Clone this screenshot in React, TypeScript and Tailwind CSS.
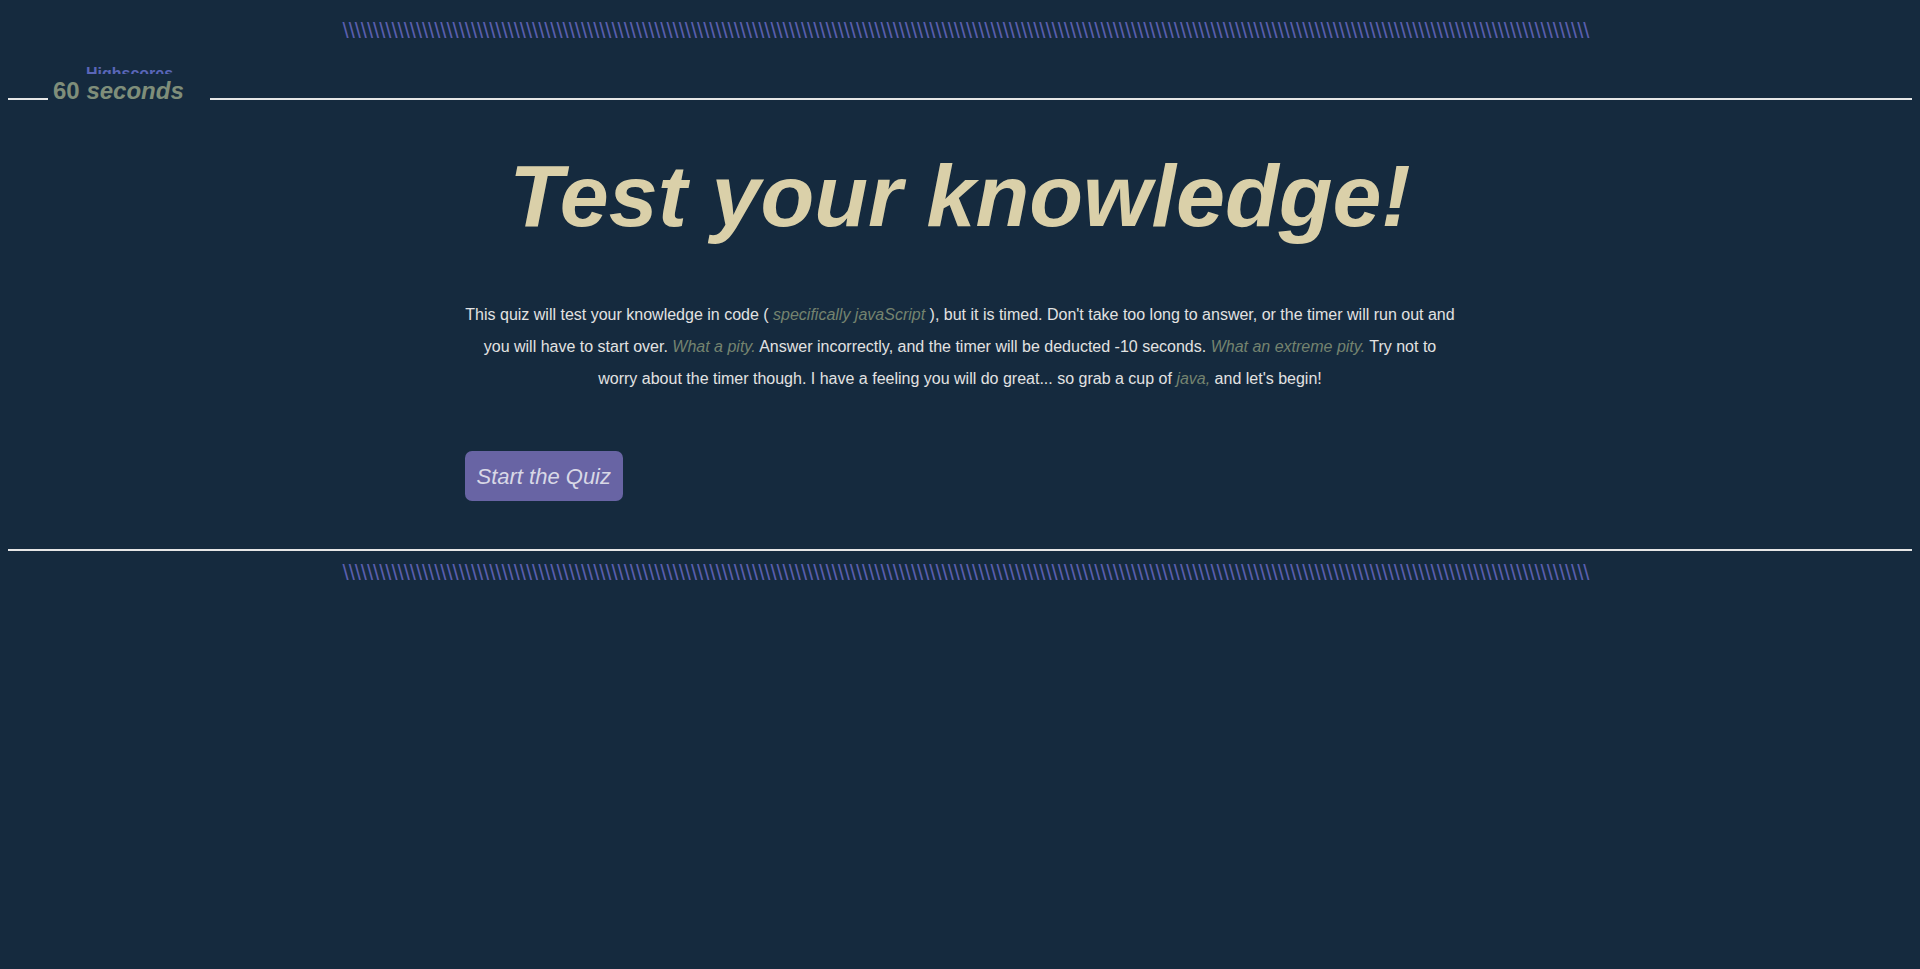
import React from "react";

const slashes = "\\".repeat(204);

const App = () => {
  return (
    <div className="min-h-screen bg-[#152a3e] font-['Liberation_Sans',Arial,sans-serif] pt-[18px]">
      {/* top stripe */}
      <div className="flex justify-center overflow-hidden whitespace-nowrap pl-[12px] text-[22px] leading-[25px] text-[#5b5fae]">
        {slashes}
      </div>

      {/* quiz box */}
      <div className="relative mx-2 mt-[55px] border-y-2 border-[#e6e6e6]">
        <div className="absolute left-[78px] -top-[34px] h-[8px] overflow-hidden">
          <a href="#" className="block text-[16px] leading-[16px] font-bold text-[#5a66b8]">
            Highscores
          </a>
        </div>

        {/* legend */}
        <div className="absolute left-[40px] -top-[23px] w-[162px] bg-[#152a3e] pl-[5px] text-[24px] leading-[28px] font-bold text-[#7f8e7a]">
          60 <span className="italic">seconds</span>
        </div>

        <div className="w-[994px] mx-auto pt-[52px] pb-[48px]">
          <h1 className="text-center text-[88px] leading-[88px] font-bold italic text-[#dad0a9]">
            Test your knowledge!
          </h1>

          <p className="mt-[59px] text-center text-[16px] leading-[32px] text-[#e2e2e2]">
            This quiz will test your knowledge in code ({" "}
            <span className="italic text-[#74836f]">specifically javaScript</span> ), but it is
            timed. Don't take too long to answer, or the timer will run out and you will have to
            start over. <span className="italic text-[#74836f]">What a pity.</span> Answer
            incorrectly, and the timer will be deducted -10 seconds.{" "}
            <span className="italic text-[#74836f]">What an extreme pity.</span> Try not to worry
            about the timer though. I have a feeling you will do great... so grab a cup of{" "}
            <span className="italic text-[#74836f]">java,</span> and let's begin!
          </p>

          <button className="mt-[56px] ml-[2px] flex h-[50px] items-center rounded-[7px] bg-[#6864a4] px-[11.5px] text-[22px] italic text-[#d8d8e6]">
            Start the Quiz
          </button>
        </div>
      </div>

      {/* bottom stripe */}
      <div className="mt-[9px] flex justify-center overflow-hidden whitespace-nowrap pl-[12px] text-[22px] leading-[25px] text-[#5b5fae]">
        {slashes}
      </div>
    </div>
  );
};

export default App;
